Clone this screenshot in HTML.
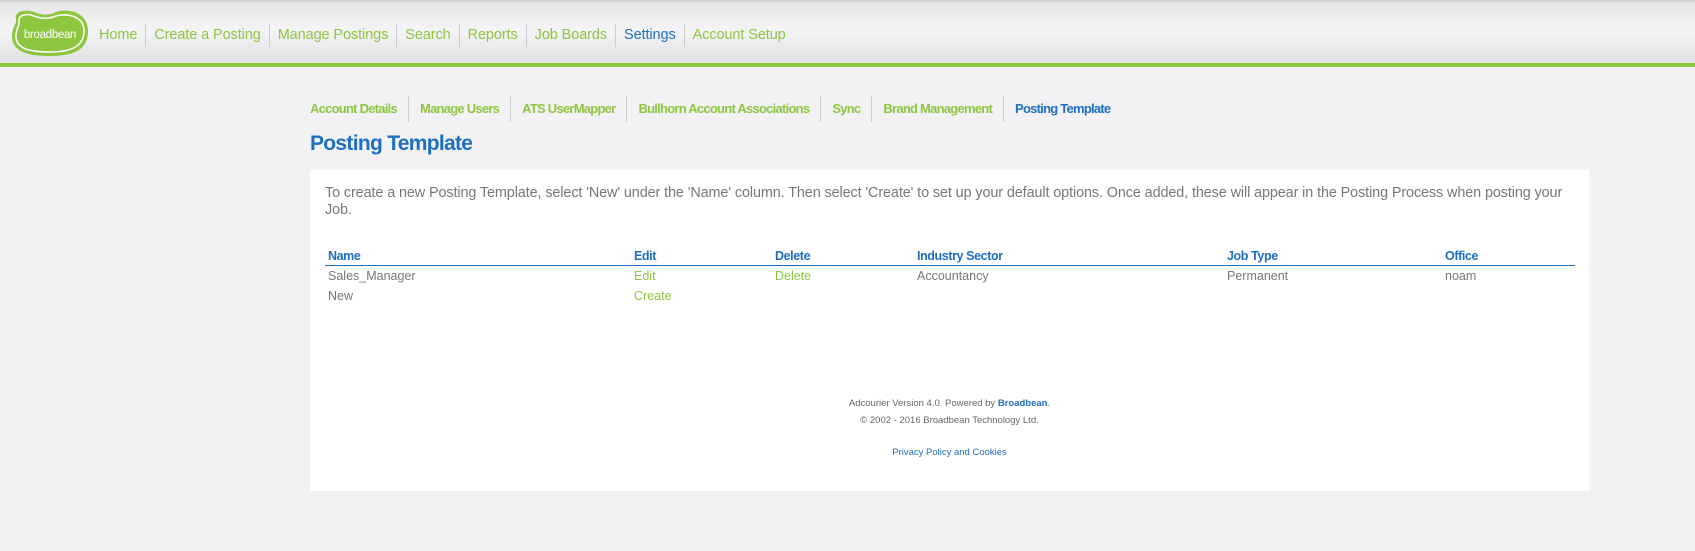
<!DOCTYPE html>
<html><head><style>
*{margin:0;padding:0;box-sizing:border-box}
body{width:1695px;height:551px;background:#f2f2f4;font-family:"Liberation Sans",sans-serif;position:relative;overflow:hidden}
.top{position:absolute;left:0;top:0;width:1695px;height:63px;background:linear-gradient(#c8c8cc 0,#e6e6e8 3px,#f4f4f6 30px,#e2e2e4 63px)}
.gl{position:absolute;left:0;top:63px;width:1695px;height:4px;background:#8dc63f}
.logo{position:absolute;left:10px;top:9px;width:80px;height:48px}
.nav{position:absolute;top:24px;left:91px;display:flex;font-size:14.5px;color:#8dc63f;letter-spacing:-0.1px}
.nav span{padding:0 8px;border-left:1px solid #ccc;line-height:23px}
.nav span:first-child{border-left:none}
.sub{position:absolute;top:96px;left:310px;display:flex;font-size:13px;font-weight:bold;color:#8dc63f;letter-spacing:-0.75px}
.sub span{padding:0 11px;border-left:1px solid #ccc;line-height:26px}
.sub span:first-child{border-left:none;padding-left:0}
h1{position:absolute;left:310px;top:132px;font-size:21px;color:#1e6fbf;letter-spacing:-0.7px}
.panel{position:absolute;left:310px;top:170px;width:1279px;height:321px;background:#fff}
.p{position:absolute;left:15px;top:15px;width:1260px;font-size:14.4px;line-height:17px;color:#777;letter-spacing:-0.1px;white-space:nowrap}
.c{position:absolute;font-size:12.5px}
.h{color:#1e6fbf;font-weight:bold;top:79px;letter-spacing:-0.4px}
.line{position:absolute;left:15px;top:95px;width:1250px;height:1px;background:#1e6fbf}
.r1{top:99px;color:#777}.r2{top:119px;color:#777}
.g{color:#8dc63f}
.f{position:absolute;left:0;width:1279px;text-align:center;font-size:9.5px;color:#666}
</style></head><body>
<div class="top"></div><div class="gl"></div>
<svg class="logo" viewBox="0 0 80 48"><path d="M6 10 C4 2 16 0 24 3 C32 6 38 7 46 3 C56 -1 78 2 78 22 C78 42 62 47 40 47 C18 47 2 43 2 27 C2 18 7 15 6 10Z" fill="#8dc63f"/><path d="M9 12 C8 6 17 4 24 7 C32 10 38 10 46 7 C55 4 74 6 74 22 C74 38 60 43 40 43 C20 43 6 40 6 27 C6 19 10 17 9 12Z" fill="none" stroke="#fff" stroke-width="1.5"/><text x="40" y="29" text-anchor="middle" font-family="Liberation Sans" font-size="11.5" letter-spacing="-0.3" fill="#fff">broadbean</text></svg>
<div class="nav"><span>Home</span><span>Create a Posting</span><span>Manage Postings</span><span>Search</span><span>Reports</span><span>Job Boards</span><span style="color:#1e6fbf">Settings</span><span>Account Setup</span></div>
<div class="sub"><span>Account Details</span><span>Manage Users</span><span>ATS UserMapper</span><span>Bullhorn Account Associations</span><span>Sync</span><span>Brand Management</span><span style="color:#1e6fbf">Posting Template</span></div>
<h1>Posting Template</h1>
<div class="panel">
<div class="p">To create a new Posting Template, select 'New' under the 'Name' column. Then select 'Create' to set up your default options. Once added, these will appear in the Posting Process when posting your<br>Job.</div>
<div class="c h" style="left:18px">Name</div><div class="c h" style="left:324px">Edit</div><div class="c h" style="left:465px">Delete</div><div class="c h" style="left:607px">Industry Sector</div><div class="c h" style="left:917px">Job Type</div><div class="c h" style="left:1135px">Office</div>
<div class="line"></div>
<div class="c r1" style="left:18px">Sales_Manager</div><div class="c r1 g" style="left:324px">Edit</div><div class="c r1 g" style="left:465px">Delete</div><div class="c r1" style="left:607px">Accountancy</div><div class="c r1" style="left:917px">Permanent</div><div class="c r1" style="left:1135px">noam</div>
<div class="c r2" style="left:18px">New</div><div class="c r2 g" style="left:324px">Create</div>
<div class="f" style="top:228px">Adcourier Version 4.0. Powered by <b style="color:#1e6fbf">Broadbean</b>.</div>
<div class="f" style="top:245px">© 2002 - 2016 Broadbean Technology Ltd.</div>
<div class="f" style="top:277px;color:#1e6fbf">Privacy Policy and Cookies</div>
</div>
</body></html>
